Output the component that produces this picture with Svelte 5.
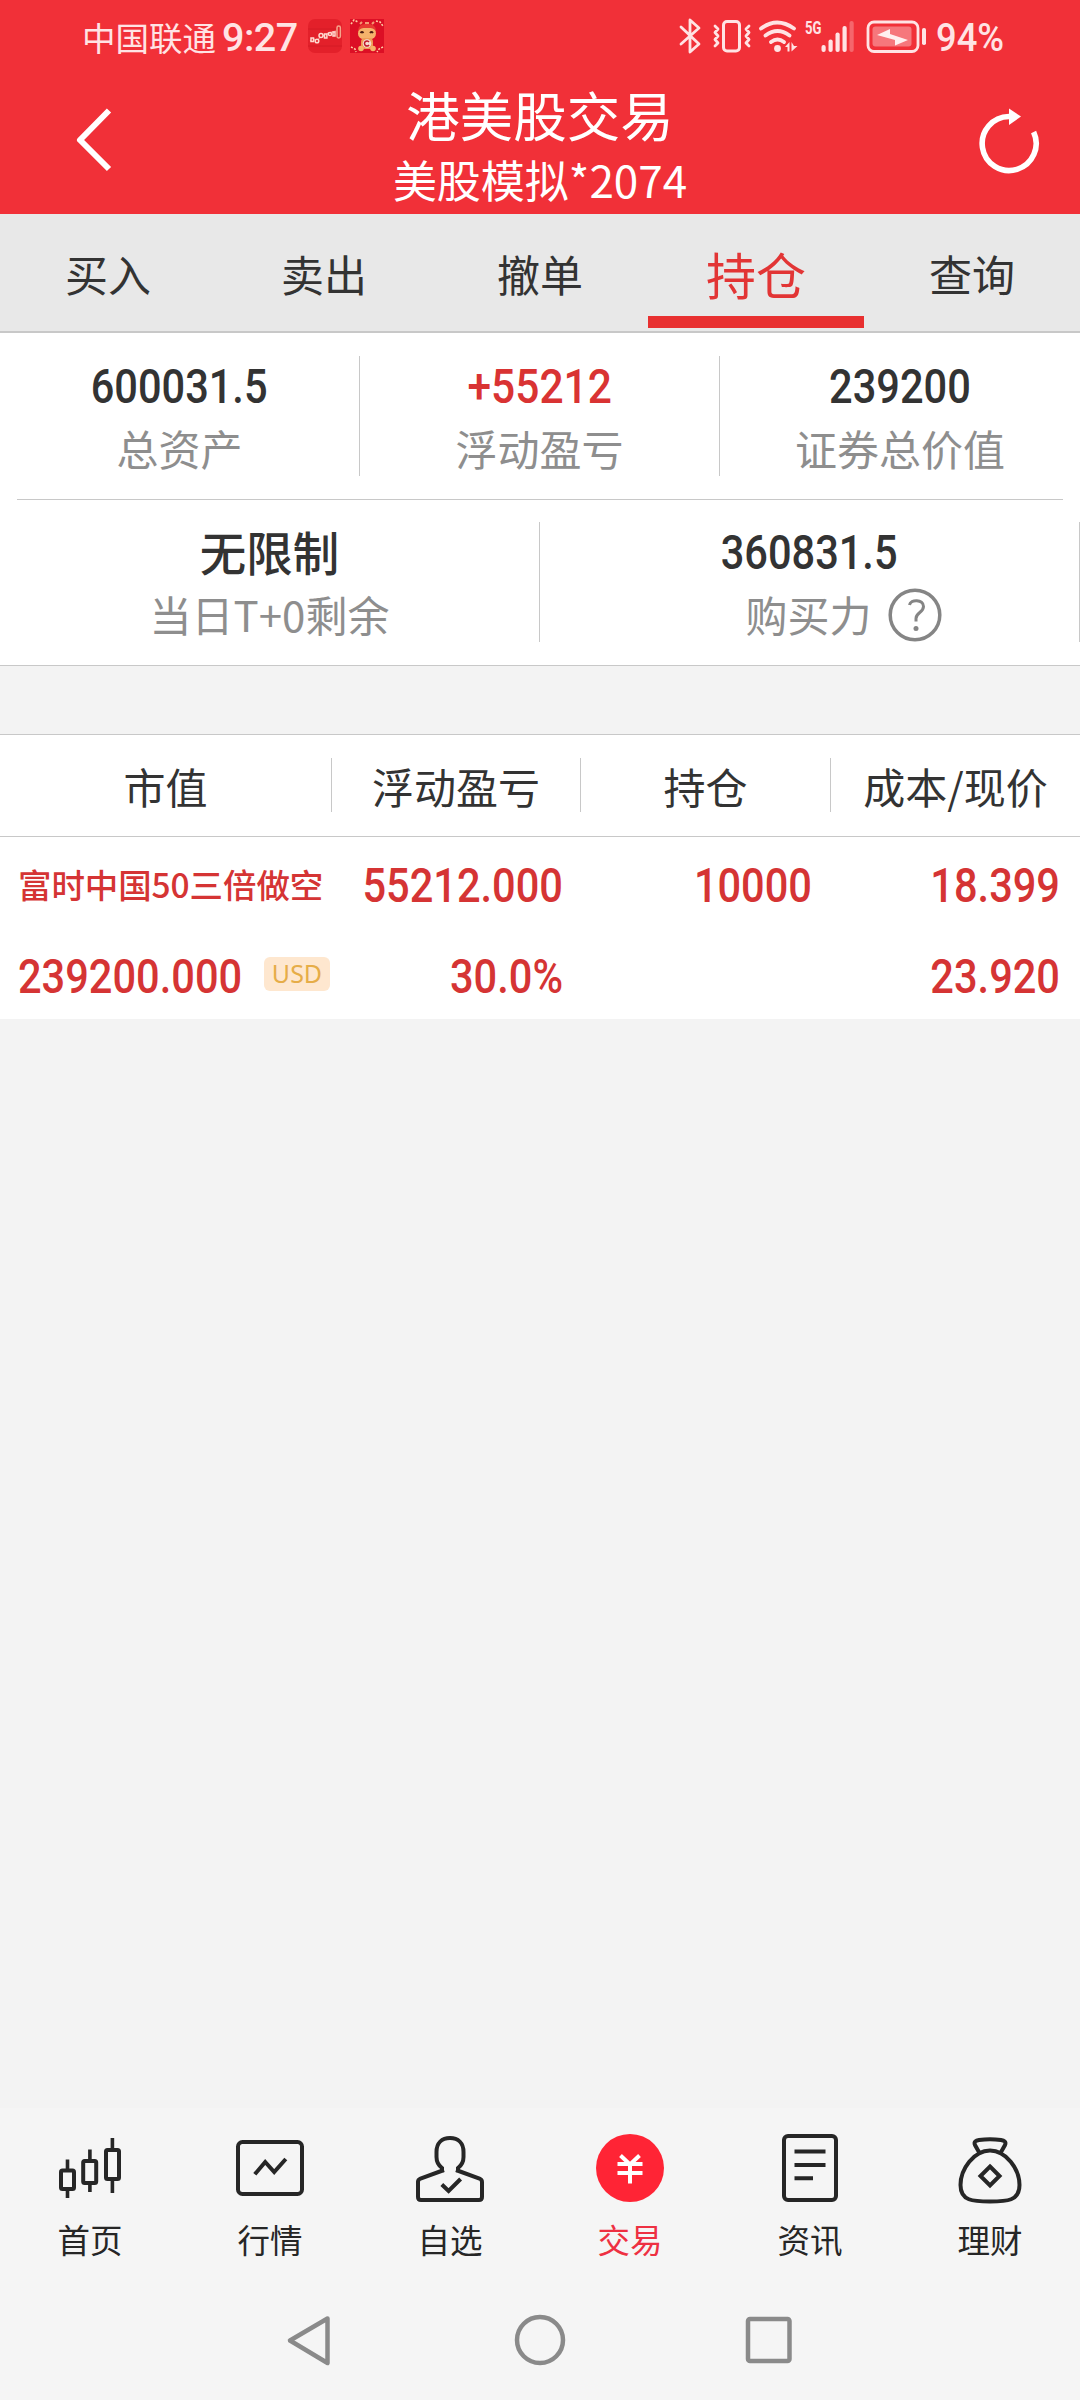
<script>
  const tabs = ['买入', '卖出', '撤单', '持仓', '查询'];
  const activeTab = '持仓';
  const columns = ['市值', '浮动盈亏', '持仓', '成本/现价'];
  const navItems = [
    { id: 'home', label: '首页' },
    { id: 'market', label: '行情' },
    { id: 'watch', label: '自选' },
    { id: 'trade', label: '交易' },
    { id: 'news', label: '资讯' },
    { id: 'wealth', label: '理财' }
  ];
</script>

<div class="screen">
  <header>
    <div class="status">
      <span class="carrier">中国联通</span>
      <span class="clock">9:27</span>
      <svg class="app-a" width="34" height="34" viewBox="0 0 34 34">
        <rect width="34" height="34" rx="7" fill="#e3202a" />
        <path d="M0 10h34M0 27h34" stroke="#d41b25" stroke-width="1" />
        <path d="M2 22l4-2 3 3 4-7 4 1 3-3 4-1 4-1" fill="none" stroke="#f48b88" stroke-width="1.2" />
        <g fill="#e3202a" stroke="#ffd9cf" stroke-width="1.5">
          <rect x="3" y="19" width="2.5" height="3.5" /><circle cx="9" cy="22" r="1.8" />
          <circle cx="13" cy="16.5" r="2" /><rect x="16.5" y="15" width="2.4" height="4" />
          <circle cx="22" cy="15" r="1.6" /><rect x="25" y="13" width="2" height="4" />
          <rect x="29" y="7" width="3.4" height="12" rx="1.7" stroke="#f5a58c" />
        </g>
      </svg>
      <svg class="app-b" width="34" height="34" viewBox="0 0 34 34">
        <rect width="34" height="34" fill="#dc0f25" />
        <path d="M1 5l3-4 4 2M26 2l4 1 3 4M1 28l4 2 1 3M33 28l-4 2-2 3" fill="none" stroke="#ffc9a0" stroke-width="1.6" stroke-dasharray="2 1.4" />
        <path d="M8 13C8 6 12 5 17 5s9 1 9 8z" fill="#e73a32" />
        <path d="M10 5l2-2M22 5l2-2M15 4h4" stroke="#f59a72" stroke-width="2" />
        <rect x="8" y="9" width="18" height="11" rx="5.5" fill="#f6b36b" />
        <path d="M10.500 14q1.500-2 3 0M20 14q1.500-2 3 0" fill="none" stroke="#4d1c12" stroke-width="1.800" />
        <rect x="11" y="19" width="12" height="11" rx="4" fill="#ef9c55" />
        <circle cx="17" cy="24.500" r="4.300" fill="#f6dcd0" />
        <path d="M19 23a2.500 2.500 0 1 0 0 3" fill="none" stroke="#c0172a" stroke-width="1.500" />
        <circle cx="11" cy="29.500" r="2.800" fill="#f6b36b" /><circle cx="23" cy="29.500" r="2.800" fill="#f6b36b" />
      </svg>
      <svg class="indicators" width="250" height="40" viewBox="0 0 250 40">
        <g fill="none" stroke="#ffe3e4" stroke-width="3" stroke-linecap="round" stroke-linejoin="round">
          <path d="M3 11l18 17-9 8V4l9 8L3 28" stroke-width="2.800" />
          <rect x="45.500" y="5.500" width="16" height="29.500" rx="3.500" />
          <path d="M37 10l3 3-3 3.500 3 3.500-3 3.500 3 3.500-3 3M71 10l-3 3 3 3.500-3 3.500 3 3.500-3 3.500 3 3" stroke-width="2.800" />
          <path d="M83 12.500q16-12 33 0M87.500 19.500q12-9 24 0M93 26q6.500-5 13 0" stroke-width="3.800" />
        </g>
        <circle cx="99.500" cy="32.500" r="3.400" fill="#ffe3e4" />
        <path d="M107 31l4.500-5v9.500h-2v-4.500zM113.500 26v9.500l6-5.500h-3.500z" fill="#ffe3e4" />
        <text x="127" y="18" class="fiveg" textLength="16.500" lengthAdjust="spacingAndGlyphs">5G</text>
        <g fill="#ffe3e4">
          <rect x="143.500" y="29" width="4.200" height="7" rx="2" /><rect x="150.500" y="23.500" width="4.200" height="12.500" rx="2" />
          <rect x="157.500" y="16.500" width="4.200" height="19.500" rx="2" /><rect x="164.500" y="10" width="4.200" height="26" rx="2" />
          <rect x="171.500" y="5" width="4.200" height="31" rx="2" opacity="0.300" />
          <rect x="194.500" y="10.500" width="39" height="20" rx="3" opacity="0.400" />
          <path d="M199 19l13-6v5l18 6-13 5.500v-5.500z" fill="#fff0f0" />
          <rect x="244" y="12" width="4" height="17" rx="1.800" />
        </g>
        <rect x="190" y="6" width="50" height="29.500" rx="6" fill="none" stroke="#ffe3e4" stroke-width="2.800" />
      </svg>
      <span class="percent">94%</span>
    </div>
    <div class="titlebar">
      <svg class="back" width="40" height="70" viewBox="0 0 40 70">
        <path d="M36 5.500L7 35l29 29" fill="none" stroke="#fff" stroke-width="6" stroke-linejoin="round" />
      </svg>
      <div class="titles">
        <h1>港美股交易</h1>
        <p>美股模拟*2074</p>
      </div>
      <svg class="refresh" width="66" height="70" viewBox="0 0 66 70">
        <path d="M33 11.500a27 27 0 1 0 24.600 15.500" fill="none" stroke="#fff" stroke-width="5.600" />
        <path d="M33 3.500l12 8-12 8.500z" fill="#fff" />
      </svg>
    </div>
  </header>

  <nav class="tabs">
    {#each tabs as tab}
      <div class="tab" class:active={tab === activeTab}><span>{tab}</span></div>
    {/each}
  </nav>

  <section class="summary">
    <div class="summary-row three">
      <div class="stat"><b class="num">600031.5</b><span>总资产</span></div>
      <div class="stat"><b class="num red">+55212</b><span>浮动盈亏</span></div>
      <div class="stat"><b class="num">239200</b><span>证券总价值</span></div>
    </div>
    <hr />
    <div class="summary-row two">
      <div class="stat"><b class="unlimited">无限制</b><span>当日T+0剩余</span></div>
      <div class="stat">
        <b class="num">360831.5</b>
        <span class="with-help">购买力
          <svg width="54" height="54" viewBox="0 0 54 54" fill="none" stroke="#858585">
            <circle cx="27" cy="27" r="24.800" stroke-width="3.500" />
            <path d="M21.500 17c1-6 14-6 14 1.500 0 6-7.500 6-7.500 12v3" stroke-width="3" />
            <circle cx="28" cy="40.500" r="2.500" fill="#858585" stroke="none" />
          </svg>
        </span>
      </div>
    </div>
  </section>

  <section class="holdings">
    <div class="thead">
      {#each columns as column}<div>{column}</div>{/each}
    </div>
    <div class="position">
      <div class="line">
        <span class="name">富时中国50三倍做空</span>
        <b class="num">55212.000</b><b class="num">10000</b><b class="num">18.399</b>
      </div>
      <div class="line">
        <div class="value"><b class="num left">239200.000</b><span class="usd">USD</span></div>
        <b class="num">30.0%</b><span></span><b class="num">23.920</b>
      </div>
    </div>
  </section>

  <footer>
    <div class="bottom-nav">
      {#each navItems as item}
        <div class="nav-item" class:current={item.id === 'trade'}>
          <svg width="80" height="80" viewBox="0 0 80 80" fill="none" stroke="#262626" stroke-width="4">
            {#if item.id === 'home'}
              <rect x="11" y="40.500" width="13" height="18.500" rx="1.500" />
              <rect x="33.200" y="31" width="13" height="22" rx="1.500" />
              <rect x="56" y="20" width="13" height="29" rx="1.500" />
              <path d="M17.500 29.500v10M17.500 60v8M39.900 19.500V30M39.900 54v8M62.400 8v11M62.400 50v13" stroke-width="3.600" />
            {:else if item.id === 'market'}
              <rect x="8" y="12" width="64" height="52" rx="4.500" />
              <path d="M24.800 44.300L35.200 32l9 10 11.600-13" />
            {:else if item.id === 'watch'}
              <path d="M32 42.500v-4.500C28 35 26.500 31.500 26.500 27v-5C26.500 13 32 8 40 8s13.500 5 13.500 14v5c0 4.500-1.500 8-5.500 11v4.500M34 40L10.500 48.500Q8 49.500 8 52v15q0 3 3 3h58q3 0 3-3V52q0-2.500-2.500-3.500L46 40" />
              <path d="M31.800 54.500l6.800 6.500 12-12" />
            {:else if item.id === 'trade'}
              <circle cx="40" cy="38" r="34" fill="#ff2435" stroke="none" />
              <path d="M30.500 25.500L40 34.500l9.500-9M40 34v19.500M27.500 34h25M27.500 43h25" stroke="#fff" />
            {:else if item.id === 'news'}
              <rect x="14" y="6" width="52" height="64" rx="4" />
              <path d="M24.500 21.500h31M24.500 35h31M24.500 48.300H43" />
            {:else}
              <path d="M29.500 23l-4.500-8c-1.500-3.500 1-4.500 4-5q11-1.500 22 0c3 .5 5.500 1.500 4 5l-4.500 8" />
              <path d="M40 20.500C24 20.500 10.500 39 10.500 55S23 71.500 40 71.500 69.500 71 69.500 55 56 20.500 40 20.500z" />
              <path d="M40 36.500l9.500 9.500-9.500 9.500L30.500 46z" />
            {/if}
          </svg>
          <span>{item.label}</span>
        </div>
      {/each}
    </div>
    <div class="system-nav">
      <svg width="60" height="60" viewBox="0 0 60 60"><path d="M46.500 8.500L9 30.500 46.500 53z" /></svg>
      <svg width="60" height="60" viewBox="0 0 60 60"><circle cx="30" cy="30" r="23" /></svg>
      <svg width="60" height="60" viewBox="0 0 60 60"><rect x="9" y="9" width="41.500" height="42" rx="2" /></svg>
    </div>
  </footer>
</div>

<style>
  :global(body) { margin: 0; background: #f3f3f3; }
  .screen {
    width: 1080px; height: 2400px; display: flex; flex-direction: column;
    background: #f3f3f3; color: #333; overflow: hidden;
    font-family: "Noto Sans CJK SC", sans-serif;
  }
  * { box-sizing: border-box; }
  svg { display: block; flex: none; }

  header { height: 214px; background: #f13038; color: #fff; }
  .status { height: 76px; display: flex; align-items: center; padding-left: 82px; color: #ffe3e4; white-space: nowrap; }
  .carrier { width: 140px; font-size: 33.500px; line-height: 73px; height: 76px; }
  .clock, .percent { font-family: Roboto, sans-serif; font-size: 39.500px; line-height: 76px; }
  .clock { width: 86px; font-weight: 500; letter-spacing: -0.500px; }
  .app-b { margin-left: 8px; }
  .app-a, .app-b { margin-bottom: 4px; }
  .indicators { margin: 0 8px 4px 294px; }
  .fiveg { font: 700 19px Roboto, sans-serif; fill: #ffe3e4; }
  .percent { font-weight: 500; transform: scaleX(0.920); transform-origin: left; }
  .titlebar { height: 138px; display: grid; grid-template-columns: 200px 1fr 200px; align-items: start; }
  .back { margin: 29px 0 0 73px; }
  .refresh { margin: 29px 38px 0 auto; }
  .titles { text-align: center; }
  h1 { margin: 0; font-size: 53.500px; line-height: 76px; font-weight: 400; }
  p { margin: 0; font-size: 44px; line-height: 54px; }

  .tabs { height: 119px; display: grid; grid-template-columns: repeat(5, 1fr); background: #e8e8e8; border-bottom: 2px solid #c8c8c8; }
  .tab { height: 114px; display: flex; justify-content: center; font-size: 43px; line-height: 119px; }
  .active { font-size: 50px; color: #e23535; border-bottom: 12px solid #e83030; }

  .summary { height: 333px; background: #fff; border-bottom: 1px solid #c8c8c8; }
  .summary-row { display: grid; padding-top: 23px; }
  .three { grid-template-columns: repeat(3, 1fr); height: 166px; }
  .two { grid-template-columns: repeat(2, 1fr); height: 165px; padding-top: 22px; }
  hr { height: 1px; margin: 0 17px; border: 0; background: #c8c8c8; }
  .stat { height: 120px; display: flex; flex-direction: column; align-items: center; border-right: 1px solid #c8c8c8; }
  .three .stat:last-child { border-right: 0; }
  .stat b { height: 62px; line-height: 62px; }
  .stat span { height: 58px; line-height: 60px; font-size: 42px; color: #8e8e8e; white-space: nowrap; }
  .num { font-family: Roboto, sans-serif; font-size: 47.500px; font-weight: 500; transform: scaleX(0.875); }
  .red { color: #d93333; transform: scaleX(0.895); }
  .stat .unlimited { font-size: 46.500px; font-weight: 500; line-height: 57px; }
  .stat .with-help { display: flex; gap: 16px; padding-left: 68px; }
  .with-help svg { margin-top: 4px; }

  .holdings { height: 285px; margin-top: 68px; background: #fff; border-top: 1px solid #c8c8c8; }
  .thead { height: 102px; padding: 23px 0; display: grid; grid-template-columns: 332px 249px 250px 249px; border-bottom: 1px solid #c8c8c8; font-size: 42px; line-height: 56px; text-align: center; }
  .thead div { height: 54px; border-right: 1px solid #c8c8c8; }
  .thead div:last-child { border-right: 0; }
  .position { color: #d53434; padding: 3px 20px 0 18px; }
  .line { height: 91px; display: grid; grid-template-columns: 314px 231px 249px 248px; align-items: center; }
  .line .num { text-align: right; transform-origin: right; }
  .line .num.left { text-align: left; transform-origin: left; width: 246px; }
  .name { font-size: 33.500px; font-weight: 500; letter-spacing: -0.100px; white-space: nowrap; padding-bottom: 4px; }
  .value { display: flex; align-items: center; }
  .usd { width: 66px; height: 34px; margin-bottom: 6px; border-radius: 6px; background: #fee7cf; color: #e6ad48; font: 25px/32px "Noto Sans", sans-serif; text-align: center; }

  footer { margin-top: auto; height: 292px; background: #f5f5f5; }
  .bottom-nav { height: 173px; padding-top: 22px; display: grid; grid-template-columns: repeat(6, 1fr); }
  .nav-item { display: flex; flex-direction: column; align-items: center; font-size: 32.500px; line-height: 57px; color: #262626; }
  .nav-item span { height: 60px; }
  .current { color: #ee3042; }
  .system-nav { padding: 29px 281px 0; display: flex; justify-content: space-between; }
  .system-nav svg { fill: none; stroke: #8a8a8a; stroke-width: 4.500; stroke-linejoin: round; }
</style>
